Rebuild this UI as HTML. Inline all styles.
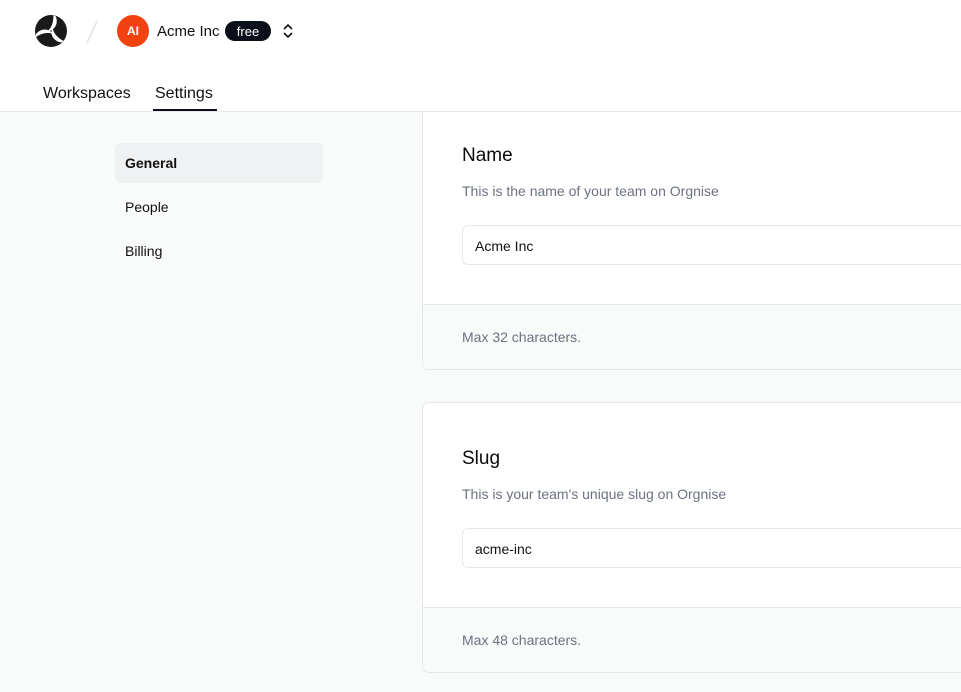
<!DOCTYPE html>
<html><head><style>
*{box-sizing:border-box;margin:0;padding:0}
body{width:961px;height:692px;overflow:hidden;background:#f9fafa;font-family:"Liberation Sans",sans-serif;position:relative;color:#111}
.header{position:absolute;left:0;top:0;width:961px;height:112px;background:#fff;border-bottom:1px solid #e5e7eb;z-index:5}
.abs{position:absolute}
.card{position:absolute;left:422px;width:560px;background:#fff;border:1px solid #e5e7eb;border-radius:7px;overflow:hidden}
.card h2{position:absolute;left:39px;font-size:19px;font-weight:normal;color:#0b0b0b}
.card .d{position:absolute;left:39px;font-size:14px;color:#6b7280}
.card .in{position:absolute;left:39px;width:560px;height:40px;border:1px solid #e5e7eb;border-radius:6px;font-size:14px;padding:12px 12px}
.card .f{position:absolute;left:0;right:0;bottom:0;background:#f9fafa;border-top:1px solid #e5e7eb}
.card .f span{position:absolute;left:39px;font-size:14px;color:#6b7280}
.nav{position:absolute;left:115px;width:208px;height:40px;font-size:14px;padding:12px 10px;border-radius:6px}
</style></head><body>
<div class="header">
<svg class="abs" style="left:35px;top:15px" width="32" height="32" viewBox="0 0 32 32"><circle cx="16" cy="16" r="16" fill="#1a1a1a"/>
<g fill="#fff">
<path d="M1 19c5-6 13-6 17 0c-5-2-11-1-17 3z"/>
<path d="M1 19c5-6 13-6 17 0c-5-2-11-1-17 3z" transform="rotate(120 16 16)"/>
<path d="M1 19c5-6 13-6 17 0c-5-2-11-1-17 3z" transform="rotate(240 16 16)"/>
</g></svg>
<div class="abs" style="left:91px;top:20px;width:2px;height:24px;background:#e5e7eb;transform:rotate(25deg)"></div>
<div class="abs" style="left:117px;top:15px;width:32px;height:32px;border-radius:50%;background:#f2420f;color:#fff;font-size:12px;font-weight:bold;text-align:center;line-height:32px">AI</div>
<div class="abs" style="left:157px;top:23px;font-size:15px">Acme Inc</div>
<div class="abs" style="left:225px;top:21px;width:46px;height:20px;border-radius:10px;background:#0b0f19;color:#fff;font-size:13px;text-align:center;line-height:21px">free</div>
<svg class="abs" style="left:281px;top:23px" width="14" height="16" viewBox="0 0 14 16"><path d="M3 6l4-4 4 4M3 10l4 4 4-4" fill="none" stroke="#111" stroke-width="1.6"/></svg>
<div class="abs" style="left:43px;top:85px;font-size:16px;color:#111">Workspaces</div>
<div class="abs" style="left:155px;top:85px;font-size:16px;color:#111">Settings</div>
<div class="abs" style="left:153px;top:109px;width:64px;height:2px;background:#0b0f19"></div>
</div>
<div class="nav" style="top:143px;background:#f0f1f2;font-weight:bold">General</div>
<div class="nav" style="top:187px">People</div>
<div class="nav" style="top:231px">Billing</div>
<div class="card" style="top:99px;height:271px;border-radius:0 0 7px 7px">
<h2 style="top:45px">Name</h2>
<div class="d" style="top:83px">This is the name of your team on Orgnise</div>
<div class="in" style="top:125px">Acme Inc</div>
<div class="f" style="height:65px"><span style="top:24px">Max 32 characters.</span></div>
</div>
<div class="card" style="top:402px;height:271px">
<h2 style="top:45px">Slug</h2>
<div class="d" style="top:83px">This is your team's unique slug on Orgnise</div>
<div class="in" style="top:125px">acme-inc</div>
<div class="f" style="height:65px"><span style="top:24px">Max 48 characters.</span></div>
</div>
</body></html>
